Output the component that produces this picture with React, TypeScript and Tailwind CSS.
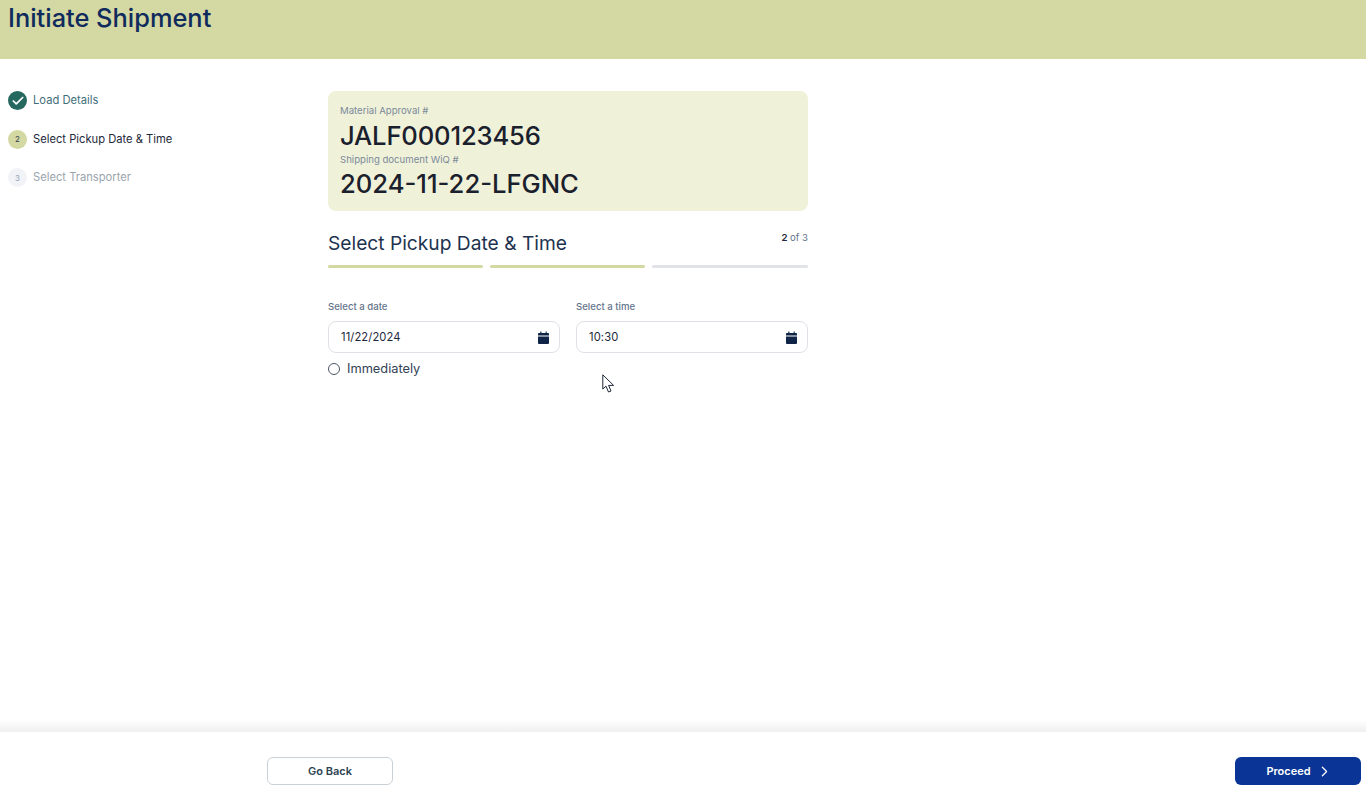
import { Check, ChevronRight } from "lucide-react";

const font = { fontFamily: "Inter, 'Liberation Sans', sans-serif" };

const CalendarIcon = () => (
  <svg width="11" height="13" viewBox="0 0 12 13" preserveAspectRatio="none" fill="#0f2447">
    <path d="M2.5 0.5h1.2v1.5h4.6V0.5h1.2v1.5H11a1 1 0 0 1 1 1V4.6H0V3a1 1 0 0 1 1-1h1.5z" />
    <path d="M0 5.4h12V12a1 1 0 0 1-1 1H1a1 1 0 0 1-1-1z" />
  </svg>
);

const DateField: React.FC<{ label: string; value: string }> = ({ label, value }) => (
  <div className="flex-1">
    <label className="block text-[9.6px] leading-[12px] font-medium text-[#64748b] mb-[8px]">{label}</label>
    <div className="h-[32px] bg-white border border-[#dfe1e6] rounded-lg pl-[12px] pr-[10px] flex items-center justify-between">
      <span className="text-[11.2px] text-[#1e293b] tracking-[0.1px]">{value}</span>
      <CalendarIcon />
    </div>
  </div>
);

export default function App() {
  return (
    <div style={font} className="h-[788px] w-[1366px] bg-white flex flex-col overflow-hidden relative">
      <header className="h-[59px] bg-[#d4d8a2] pl-2 shrink-0">
        <h1 className="text-[25.4px] leading-[36px] font-medium text-[#0f2a5c]">Initiate Shipment</h1>
      </header>

      <div className="flex-1 flex">
        <aside className="w-[328px] shrink-0 pl-2 pt-8 flex flex-col gap-[19.5px]">
          <div className="flex items-center gap-[6px] h-[19px]">
            <span className="w-[19px] h-[19px] rounded-full bg-[#256860] flex items-center justify-center">
              <Check size={14} strokeWidth={3} className="text-white" />
            </span>
            <span className="text-[11.2px] text-[#3f6e7a]">Load Details</span>
          </div>
          <div className="flex items-center gap-[6px] h-[19px]">
            <span className="w-[19px] h-[19px] rounded-full bg-[#d4d8a2] flex items-center justify-center text-[8px] text-[#334155]">2</span>
            <span className="text-[11.2px] text-[#1e293b]">Select Pickup Date &amp; Time</span>
          </div>
          <div className="flex items-center gap-[6px] h-[19px]">
            <span className="w-[19px] h-[19px] rounded-full bg-[#f1f3f6] flex items-center justify-center text-[8px] text-[#94a3b8]">3</span>
            <span className="text-[11.2px] text-[#9aa5ad]">Select Transporter</span>
          </div>
        </aside>

        <main className="w-[480px] pt-8">
          <section className="h-[120px] bg-[#eff1d9] rounded-lg pl-[12px] pt-[13px]">
            <p className="text-[9.6px] leading-[13px] text-[#7c8a9a]">Material Approval #</p>
            <p className="pt-[1px] text-[25.6px] leading-[35px] tracking-[-0.15px] font-medium text-[#1a202c]">JALF000123456</p>
            <p className="text-[9.6px] leading-[13px] text-[#7c8a9a]">Shipping document WiQ #</p>
            <p className="text-[25.6px] leading-[36px] font-medium text-[#1a202c]">2024-11-22-LFGNC</p>
          </section>

          <div className="flex justify-between mt-[20px] h-[34px]">
            <h2 className="text-[19.2px] leading-[25px] text-[#1e3350]">Select Pickup Date &amp; Time</h2>
            <span className="text-[9.6px] leading-[13px] text-[#64748b]">
              <b className="font-semibold text-[#1e293b]">2</b> of 3
            </span>
          </div>

          <div className="flex gap-[7px]">
            <div className="w-[155px] h-[3px] rounded-sm bg-[#d4d8a2]" />
            <div className="w-[155px] h-[3px] rounded-sm bg-[#d4d8a2]" />
            <div className="flex-1 h-[3px] rounded-sm bg-[#e2e3e8]" />
          </div>

          <div className="flex gap-[16px] mt-[33px]">
            <DateField label="Select a date" value="11/22/2024" />
            <DateField label="Select a time" value="10:30" />
          </div>

          <div className="flex items-center gap-[7px] mt-[7px]">
            <span className="w-[12px] h-[12px] rounded-full border border-[#4b5563] bg-white" />
            <span className="text-[12.8px] leading-[18px] text-[#334155]">Immediately</span>
          </div>
        </main>
      </div>

      <div className="h-[12px] bg-gradient-to-b from-white to-[#efefef] shrink-0" />
      <footer className="h-[56px] bg-white shrink-0 flex items-start justify-between pt-[25px] pl-[267px] pr-[5px]">
        <button className="w-[126px] h-[28px] rounded-md border border-[#c9d1d6] bg-white text-[11px] font-semibold text-[#2c4252]">
          Go Back
        </button>
        <button className="w-[126px] h-[28px] rounded-md bg-[#0a3596] pl-[3px] text-[11px] font-semibold text-white flex items-center justify-center gap-[5px]">
          Proceed
          <ChevronRight size={17} strokeWidth={1.75} />
        </button>
      </footer>

      {/* mouse pointer caught in the capture */}
      <svg className="absolute left-[602px] top-[374px]" width="13" height="20" viewBox="0 0 13 20" fill="white" stroke="#1f2937" strokeWidth="1">
        <path d="M0.8 0.8V15L4 12.2L6.5 18L9 17L6.6 11.4H11.6Z" />
      </svg>
    </div>
  );
}
